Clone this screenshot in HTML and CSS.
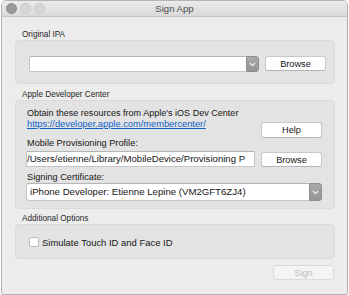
FILE: index.html
```html
<!DOCTYPE html>
<html>
<head>
<meta charset="utf-8">
<link rel="stylesheet" href="styles.css">
</head>
<body>
<div class="window">
  <div class="titlebar">
    <div class="lights">
      <span class="light close"></span>
      <span class="light off"></span>
      <span class="light off"></span>
    </div>
    <div class="title">Sign App</div>
  </div>
  <div class="content">
    <div class="glabel">Original IPA</div>
    <div class="box box-ipa">
      <div class="combo">
        <div class="combo-field"></div>
        <div class="combo-arrow"><svg width="7" height="5" viewBox="0 0 7 5"><path d="M1 1.2 L3.5 3.6 L6 1.2" fill="none" stroke="#fff" stroke-width="1.1"/></svg></div>
      </div>
      <div class="btn btn-browse1">Browse</div>
    </div>

    <div class="glabel gap">Apple Developer Center</div>
    <div class="box box-dev">
      <div class="devgrid">
        <div class="info">
          <div class="line obtain">Obtain these resources from Apple's iOS Dev Center</div>
          <div class="line link">https://developer.apple.com/membercenter/</div>
        </div>
        <div class="btn btn-help">Help</div>
        <div class="line wide">Mobile Provisioning Profile:</div>
        <div class="pathfield">/Users/etienne/Library/MobileDevice/Provisioning P</div>
        <div class="btn btn-browse2">Browse</div>
        <div class="line wide sign-label">Signing Certificate:</div>
        <div class="popup wide">
          <div class="popup-text">iPhone Developer: Etienne Lepine (VM2GFT6ZJ4)</div>
          <div class="popup-arrow"><svg width="7" height="5" viewBox="0 0 7 5"><path d="M1 1.2 L3.5 3.6 L6 1.2" fill="none" stroke="#fff" stroke-width="1.1"/></svg></div>
        </div>
      </div>
    </div>

    <div class="glabel gap2">Additional Options</div>
    <div class="box box-opt">
      <span class="checkbox"></span>
      <span class="cblabel">Simulate Touch ID and Face ID</span>
    </div>

    <div class="footer">
      <div class="btn btn-sign">Sign</div>
    </div>
  </div>
</div>
</body>
</html>
```

FILE: styles.css
```css
* { box-sizing: border-box; }
html, body { margin: 0; padding: 0; background: #ffffff; }
body { font-family: "Liberation Sans", Arial, sans-serif; color: #161616; }

.window {
  margin-left: 1px;
  width: 347px;
  height: 295px;
  border: 1px solid #b3b3b3;
  border-radius: 5px 5px 2px 2px;
  background: #ececec;
  overflow: hidden;
}

.titlebar {
  position: relative;
  height: 16px;
  border-bottom: 1px solid #c4c4c4;
  background: linear-gradient(#ebebeb, #d9d9d9);
  display: flex;
  align-items: center;
  justify-content: center;
}
.lights {
  position: absolute;
  left: 4px;
  top: 1.5px;
  display: flex;
  gap: 3px;
}
.light {
  width: 11px;
  height: 11px;
  border-radius: 50%;
  display: block;
}
.light.close { background: #9a9a9a; border: 1px solid #8a8a8a; }
.light.off { background: #d6d6d6; border: 1px solid #c8c8c8; }
.title {
  font-size: 9.6px;
  color: #4b4b4b;
  line-height: 15px;
}

.content {
  padding: 13px 12px 0 13px;
}

.glabel {
  font-size: 8.2px;
  line-height: 10px;
  height: 10px;
  padding-left: 7px;
  color: #262626;
}
.glabel.gap { margin-top: 6px; }
.glabel.gap2 { margin-top: 5px; }

.box {
  background: #e3e3e3;
  border: 1px solid #dadada;
  border-radius: 4px;
}

.box-ipa {
  height: 44px;
  display: flex;
  align-items: flex-start;
  padding: 15px 0 0 13px;
}
.combo {
  width: 230px;
  height: 16px;
  display: flex;
}
.combo-field {
  flex: 1;
  background: #ffffff;
  border: 1px solid #c6c6c6;
  border-top-color: #b5b5b5;
  border-right: none;
  border-radius: 2px 0 0 2px;
}
.combo-arrow, .popup-arrow {
  width: 13px;
  background: linear-gradient(#a9a9a9, #959595);
  border: 1px solid #8e8e8e;
  border-radius: 0 3px 3px 0;
  display: flex;
  align-items: center;
  justify-content: center;
}

.btn {
  background: #ffffff;
  border: 1px solid #c8c8c8;
  border-bottom-color: #b4b4b4;
  border-radius: 3px;
  font-size: 9.2px;
  color: #161616;
  display: flex;
  align-items: center;
  justify-content: center;
  width: 61px;
  height: 15px;
}
.btn-browse1 { margin-left: 6px; }

.box-dev {
  height: 109px;
  padding: 7px 12px 0 10px;
}
.devgrid {
  display: grid;
  grid-template-columns: 1fr 61px;
  column-gap: 6px;
}
.line {
  font-size: 9.2px;
  line-height: 11px;
  height: 11px;
  white-space: nowrap;
  padding-left: 1px;
}
.line.obtain { font-size: 9.05px; }
.info { grid-column: 1; }
.link { color: #0f62c9; text-decoration: underline; font-size: 9.3px; }
.btn-help { grid-column: 2; margin-top: 14px; height: 16px; }
.wide { grid-column: 1 / -1; }
.pathfield {
  grid-column: 1;
  margin-top: 2px;
  height: 16px;
  background: #ffffff;
  border: 1px solid #c6c6c6;
  border-top-color: #b5b5b5;
  font-size: 9.6px;
  line-height: 14px;
  padding-left: 0;
  white-space: nowrap;
  overflow: hidden;
}
.btn-browse2 { grid-column: 2; margin-top: 3px; }
.sign-label { margin-top: 5px; }
.popup {
  height: 18px;
  display: flex;
}
.popup-text {
  flex: 1;
  background: #ffffff;
  border: 1px solid #c6c6c6;
  border-top-color: #b5b5b5;
  border-right: none;
  border-radius: 3px 0 0 3px;
  font-size: 9.65px;
  line-height: 16px;
  padding-left: 3px;
  white-space: nowrap;
  overflow: hidden;
}

.box-opt {
  height: 35px;
  display: flex;
  align-items: center;
  padding-left: 13px;
  padding-top: 1px;
}
.checkbox {
  width: 10px;
  height: 10px;
  background: #ffffff;
  border: 1px solid #b9b9b9;
  border-radius: 2.5px;
  display: block;
}
.cblabel {
  margin-left: 3px;
  font-size: 9.45px;
  line-height: 11px;
}

.footer {
  display: flex;
  justify-content: flex-end;
  margin-top: 6px;
  padding-right: 1px;
}
.btn-sign {
  background: #f4f4f4;
  border-color: #dadada;
  color: #bcbcbc;
}
```
